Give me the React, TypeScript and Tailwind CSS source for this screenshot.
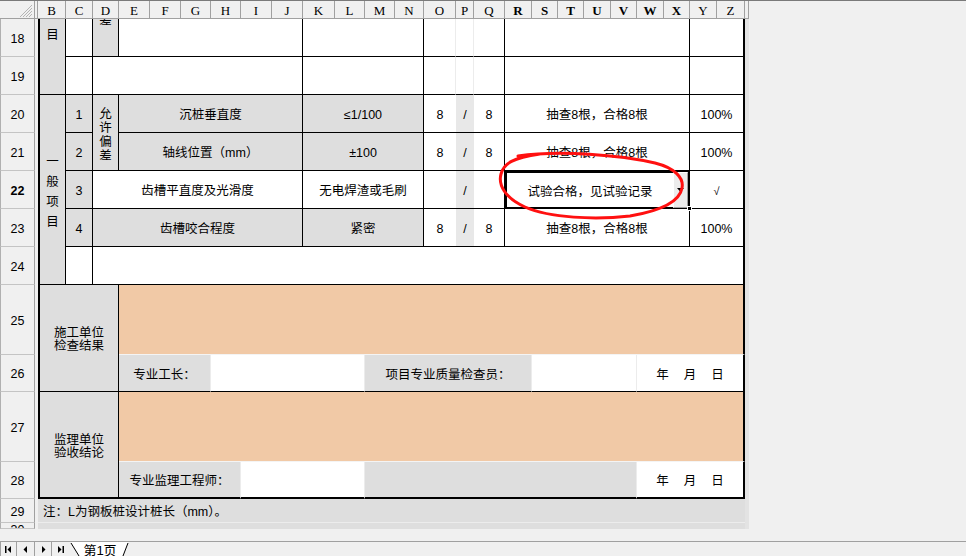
import React from "react";

const cell = "flex items-center justify-center overflow-hidden text-black pt-[4px]";
const G = "bg-[#dedede]";
const W = "bg-white";
const PE = "bg-[#f1c9a6]";
const br = "border-r border-r-black";
const bb = "border-b border-b-black";
const bl2 = "border-l-2 border-l-black";
const br2 = "border-r-2 border-r-black";
const bb2 = "border-b-2 border-b-black";
const fr = "border-r border-r-[#ececec]";

const letters = ["B","C","D","E","F","G","H","I","J","K","L","M","N","O","P","Q","R","S","T","U","V","W","X","Y","Z"];
const colStarts = ["col-start-3","col-start-4","col-start-5","col-start-6","col-start-7","col-start-8","col-start-9","col-start-10","col-start-11","col-start-12","col-start-13","col-start-14","col-start-15","col-start-16","col-start-17","col-start-18","col-start-19","col-start-20","col-start-21","col-start-22","col-start-23","col-start-24","col-start-25","col-start-26","col-start-27"];
const boldCols = ["R","S","T","U","V","W","X"];
const rowStarts = ["row-start-2","row-start-3","row-start-4","row-start-5","row-start-6","row-start-7","row-start-8","row-start-9","row-start-10","row-start-11","row-start-12","row-start-13","row-start-14"];

function YMD() {
  return (
    <div className="flex items-center gap-[15px]">
      <span>年</span>
      <span>月</span>
      <span>日</span>
    </div>
  );
}

export default function App() {
  return (
    <div className="relative w-[966px] h-[556px] overflow-hidden bg-[#f0f0f0] flex flex-col font-['Liberation_Sans','Noto_Sans_CJK_SC',sans-serif] text-[12.5px] leading-none text-black">
      <div className="grid border-t border-t-[#7a7a7a] grid-cols-[35px_3px_28px_27px_26px_31px_31px_30px_30px_31px_31px_32px_30px_30px_29px_32px_18px_31px_27px_26px_26px_27px_26px_27px_26px_27px_28px_4px_1fr] grid-rows-[18px_38px_38px_38px_38px_38px_38px_38px_70px_37px_70px_37px_24px_6px]">
        {/* corner */}
        <div className="col-start-1 row-start-1 bg-[#f0f0f0] border-r border-b border-r-[#a0a0a0] border-b-[#a0a0a0] flex items-end justify-end pr-[2px] pb-[1px]">
          <svg width="12" height="12" viewBox="0 0 12 12">
            <path d="M12 0 L0 12 M12 3 L3 12 M12 6 L6 12 M12 9 L9 12" stroke="#b4b4b4" strokeWidth="1" />
          </svg>
        </div>
        <div className="col-start-2 row-start-1 bg-[#f0f0f0] border-r border-b border-r-[#a0a0a0] border-b-[#a0a0a0]" />
        {letters.map((l, i) => (
          <div
            key={l}
            className={`${colStarts[i]} row-start-1 bg-[#f0f0f0] border-r border-b border-r-[#a0a0a0] border-b-[#a0a0a0] flex items-center justify-center pt-[2px] font-['Liberation_Serif',serif] text-[13px] ${boldCols.includes(l) ? "font-bold" : ""}`}
          >
            {l}
          </div>
        ))}
        <div className="col-start-28 row-start-1 bg-[#f0f0f0] border-r border-b border-r-[#a0a0a0] border-b-[#a0a0a0]" />

        {/* row headers */}
        {rowStarts.map((rs, i) => (
          <div
            key={rs}
            className={`col-start-1 ${rs} bg-[#f0f0f0] border-l border-r border-b border-l-[#b0b0b0] border-r-[#a0a0a0] border-b-[#c4c4c4] flex ${i === 12 ? "items-start pt-[1px]" : "items-center pt-[3px]"} justify-center overflow-hidden text-[12.5px] font-['Liberation_Sans',sans-serif] ${i === 4 ? "font-bold" : ""}`}
          >
            {18 + i}
          </div>
        ))}

        {/* right strip */}
        <div className="col-start-28 row-start-2 row-span-13 bg-[#e3e3e3]" />

        {/* ---- Row 18 ---- */}
        <div className={`col-start-3 row-start-2 row-span-2 ${G} ${bl2} ${br} ${bb} flex justify-center items-start pt-[10px]`}>
          <span>目</span>
        </div>
        <div className={`col-start-4 row-start-2 ${W} ${br} ${bb}`} />
        <div className={`col-start-5 row-start-2 ${G} ${br} ${bb} flex justify-center items-start overflow-hidden`}>
          <span className="-mt-[4px]">差</span>
        </div>
        <div className={`col-start-6 col-span-6 row-start-2 ${W} ${br} ${bb}`} />
        <div className={`col-start-12 col-span-4 row-start-2 ${W} ${br} ${bb}`} />
        <div className={`col-start-16 row-start-2 ${W} ${bb} border-r border-r-[#ececec]`} />
        <div className={`col-start-17 row-start-2 ${W} ${bb} border-r border-r-[#ececec]`} />
        <div className={`col-start-18 row-start-2 ${W} ${br} ${bb}`} />
        <div className={`col-start-19 col-span-7 row-start-2 ${W} ${br} ${bb}`} />
        <div className={`col-start-26 col-span-2 row-start-2 ${W} ${br2} ${bb}`} />

        {/* ---- Row 19 ---- */}
        <div className={`col-start-4 row-start-3 ${W} ${br} ${bb}`} />
        <div className={`col-start-5 col-span-7 row-start-3 ${W} ${br} ${bb}`} />
        <div className={`col-start-12 col-span-4 row-start-3 ${W} ${br} ${bb}`} />
        <div className={`col-start-16 row-start-3 ${W} ${bb} border-r border-r-[#ececec]`} />
        <div className={`col-start-17 row-start-3 ${W} ${bb} border-r border-r-[#ececec]`} />
        <div className={`col-start-18 row-start-3 ${W} ${br} ${bb}`} />
        <div className={`col-start-19 col-span-7 row-start-3 ${W} ${br} ${bb}`} />
        <div className={`col-start-26 col-span-2 row-start-3 ${W} ${br2} ${bb}`} />

        {/* ---- Rows 20-24 label ---- */}
        <div className={`col-start-3 row-start-4 row-span-5 ${G} ${bl2} ${br} ${bb} flex flex-col items-center justify-center pt-[4px] leading-[20px]`}>
          <span>一</span>
          <span>般</span>
          <span>项</span>
          <span>目</span>
        </div>

        {/* ---- Row 20 ---- */}
        <div className={`col-start-4 row-start-4 ${G} ${br} ${bb} ${cell}`}>1</div>
        <div className={`col-start-5 row-start-4 row-span-2 ${G} ${br} ${bb} flex flex-col items-center justify-center pt-[4px] leading-[14px]`}>
          <span>允</span>
          <span>许</span>
          <span>偏</span>
          <span>差</span>
        </div>
        <div className={`col-start-6 col-span-6 row-start-4 ${G} ${br} ${bb} ${cell}`}>沉桩垂直度</div>
        <div className={`col-start-12 col-span-4 row-start-4 ${G} ${br} ${bb} ${cell}`}>≤1/100</div>
        <div className={`col-start-16 row-start-4 ${W} ${bb} ${cell}`}>8</div>
        <div className={`col-start-17 row-start-4 bg-[#e8e8e8] ${bb} ${cell}`}>/</div>
        <div className={`col-start-18 row-start-4 ${W} ${br} ${bb} ${cell}`}>8</div>
        <div className={`col-start-19 col-span-7 row-start-4 ${W} ${br} ${bb} ${cell}`}>抽查8根，合格8根</div>
        <div className={`col-start-26 col-span-2 row-start-4 ${W} ${br2} ${bb} ${cell}`}>100%</div>

        {/* ---- Row 21 ---- */}
        <div className={`col-start-4 row-start-5 ${G} ${br} ${bb} ${cell}`}>2</div>
        <div className={`col-start-6 col-span-6 row-start-5 ${G} ${br} ${bb} ${cell}`}>轴线位置（mm）</div>
        <div className={`col-start-12 col-span-4 row-start-5 ${G} ${br} ${bb} ${cell}`}>±100</div>
        <div className={`col-start-16 row-start-5 ${W} ${bb} ${cell}`}>8</div>
        <div className={`col-start-17 row-start-5 bg-[#e8e8e8] ${bb} ${cell}`}>/</div>
        <div className={`col-start-18 row-start-5 ${W} ${br} ${bb} ${cell}`}>8</div>
        <div className={`col-start-19 col-span-7 row-start-5 ${W} ${br} ${bb} ${cell}`}>抽查8根，合格8根</div>
        <div className={`col-start-26 col-span-2 row-start-5 ${W} ${br2} ${bb} ${cell}`}>100%</div>

        {/* ---- Row 22 ---- */}
        <div className={`col-start-4 row-start-6 ${G} ${br} ${bb} ${cell}`}>3</div>
        <div className={`col-start-5 col-span-7 row-start-6 ${W} ${br} ${bb} ${cell}`}>齿槽平直度及光滑度</div>
        <div className={`col-start-12 col-span-4 row-start-6 ${W} ${br} ${bb} ${cell}`}>无电焊渣或毛刷</div>
        <div className={`col-start-16 row-start-6 ${W} ${bb} ${cell}`} />
        <div className={`col-start-17 row-start-6 bg-[#e8e8e8] ${bb} ${cell}`}>/</div>
        <div className={`col-start-18 row-start-6 ${W} ${br} ${bb} ${cell}`} />
        <div className={`col-start-19 col-span-7 row-start-6 ${W} relative border-2 border-black flex items-stretch`}>
          <div className="flex-1 flex items-center justify-center pt-[4px]">试验合格，见试验记录</div>
          <div className="w-[15px] my-[-1px] bg-[#ececec] border-l border-t border-r border-b border-l-white border-t-white border-r-[#a0a0a0] border-b-[#a0a0a0] flex items-center justify-center">
            <svg width="7" height="4" viewBox="0 0 7 4">
              <path d="M0 0 L7 0 L3.5 4 Z" fill="#000" />
            </svg>
          </div>
          <div className="absolute -right-[4px] -bottom-[4px] w-[5px] h-[5px] bg-black border border-white" />
        </div>
        <div className={`col-start-26 col-span-2 row-start-6 ${W} ${br2} ${bb} ${cell}`}>
          <span className="text-[11px]">√</span>
        </div>

        {/* ---- Row 23 ---- */}
        <div className={`col-start-4 row-start-7 ${G} ${br} ${bb} ${cell}`}>4</div>
        <div className={`col-start-5 col-span-7 row-start-7 ${G} ${br} ${bb} ${cell}`}>齿槽咬合程度</div>
        <div className={`col-start-12 col-span-4 row-start-7 ${G} ${br} ${bb} ${cell}`}>紧密</div>
        <div className={`col-start-16 row-start-7 ${W} ${bb} ${cell}`}>8</div>
        <div className={`col-start-17 row-start-7 bg-[#e8e8e8] ${bb} ${cell}`}>/</div>
        <div className={`col-start-18 row-start-7 ${W} ${br} ${bb} ${cell}`}>8</div>
        <div className={`col-start-19 col-span-7 row-start-7 ${W} ${br} ${bb} ${cell}`}>抽查8根，合格8根</div>
        <div className={`col-start-26 col-span-2 row-start-7 ${W} ${br2} ${bb} ${cell}`}>100%</div>

        {/* ---- Row 24 ---- */}
        <div className={`col-start-4 row-start-8 ${W} ${br} ${bb}`} />
        <div className={`col-start-5 col-span-23 row-start-8 ${W} ${br2} ${bb}`} />

        {/* ---- Rows 25-26 ---- */}
        <div className={`col-start-3 col-span-3 row-start-9 row-span-2 ${G} ${bl2} ${br} ${bb} flex flex-col items-center justify-center pt-[4px] leading-[13px]`}>
          <span>施工单位</span>
          <span>检查结果</span>
        </div>
        <div className={`col-start-6 col-span-22 row-start-9 ${PE} ${br2} border-b border-b-[#f4f4f4]`} />
        <div className={`col-start-6 col-span-3 row-start-10 ${G} ${fr} ${bb} ${cell}`}>专业工长：</div>
        <div className={`col-start-9 col-span-5 row-start-10 ${W} ${fr} ${bb}`} />
        <div className={`col-start-14 col-span-6 row-start-10 ${G} ${fr} ${bb} ${cell}`}>项目专业质量检查员：</div>
        <div className={`col-start-20 col-span-4 row-start-10 ${W} ${fr} ${bb}`} />
        <div className={`col-start-24 col-span-4 row-start-10 ${W} ${br2} ${bb} ${cell}`}>
          <YMD />
        </div>

        {/* ---- Rows 27-28 ---- */}
        <div className={`col-start-3 col-span-3 row-start-11 row-span-2 ${G} ${bl2} ${br} ${bb2} flex flex-col items-center justify-center pt-[4px] leading-[13px]`}>
          <span>监理单位</span>
          <span>验收结论</span>
        </div>
        <div className={`col-start-6 col-span-22 row-start-11 ${PE} ${br2} border-b border-b-[#f4f4f4]`} />
        <div className={`col-start-6 col-span-4 row-start-12 ${G} ${fr} ${bb2} ${cell}`}>专业监理工程师：</div>
        <div className={`col-start-10 col-span-4 row-start-12 ${W} ${fr} ${bb2}`} />
        <div className={`col-start-14 col-span-10 row-start-12 ${G} ${fr} ${bb2}`} />
        <div className={`col-start-24 col-span-4 row-start-12 ${W} ${br2} ${bb2} ${cell}`}>
          <YMD />
        </div>

        {/* ---- Row 29 ---- */}
        <div className={`col-start-3 col-span-25 row-start-13 ${G} border-b border-b-[#ececec] flex items-center pt-[4px] pl-[5px]`}>
          注：L为钢板桩设计桩长（mm）。
        </div>
        {/* ---- Row 30 (partial) ---- */}
        <div className={`col-start-3 col-span-25 row-start-14 ${G}`} />
      </div>

      <div className="h-[12px] bg-[#f0f0f0]" />

      {/* sheet tab bar */}
      <div className="h-[15px] flex items-stretch bg-[#f0f0f0] border-t border-t-[#a0a0a0]">
        <div className="w-[17px] border-l border-r border-l-[#a0a0a0] border-r-[#a0a0a0] flex items-center justify-center">
          <svg width="7" height="7" viewBox="0 0 7 7">
            <rect x="0" y="0" width="1.5" height="7" fill="#000" />
            <path d="M6 0 L6 7 L2.5 3.5 Z" fill="#000" />
          </svg>
        </div>
        <div className="w-[18px] border-r border-r-[#a0a0a0] flex items-center justify-center">
          <svg width="5" height="7" viewBox="0 0 5 7">
            <path d="M4 0 L4 7 L0.5 3.5 Z" fill="#000" />
          </svg>
        </div>
        <div className="w-[17px] border-r border-r-[#a0a0a0] flex items-center justify-center">
          <svg width="5" height="7" viewBox="0 0 5 7">
            <path d="M1 0 L1 7 L4.5 3.5 Z" fill="#000" />
          </svg>
        </div>
        <div className="w-[16px] flex items-center justify-center">
          <svg width="7" height="7" viewBox="0 0 7 7">
            <path d="M1 0 L1 7 L4.5 3.5 Z" fill="#000" />
            <rect x="5.5" y="0" width="1.5" height="7" fill="#000" />
          </svg>
        </div>
        <div className="relative w-[62px] flex items-center justify-center pt-[2px] text-[13px]">
          <svg className="absolute inset-0" width="62" height="15" viewBox="0 0 62 15">
            <path d="M3 0 L12 14 L54 14 L60 0" fill="#ffffff" stroke="none" />
            <path d="M3 1 L11 14 M60 1 L55 14" stroke="#000" strokeWidth="1" fill="none" />
          </svg>
          <span className="relative pl-[2px]">第1页</span>
        </div>
      </div>

      {/* hand-drawn red annotation */}
      <svg className="absolute inset-0 pointer-events-none" width="966" height="556" viewBox="0 0 966 556">
        <path
          d="M 518 156 C 560 150, 620 155, 655 163 C 675 168, 684 178, 682 188 C 680 200, 665 210, 630 216 C 595 220, 550 218, 525 207 C 505 198, 498 185, 501 174 C 504 163, 513 158, 540 154"
          stroke="#ff1010"
          strokeWidth="3"
          fill="none"
          strokeLinecap="round"
        />
      </svg>
    </div>
  );
}
